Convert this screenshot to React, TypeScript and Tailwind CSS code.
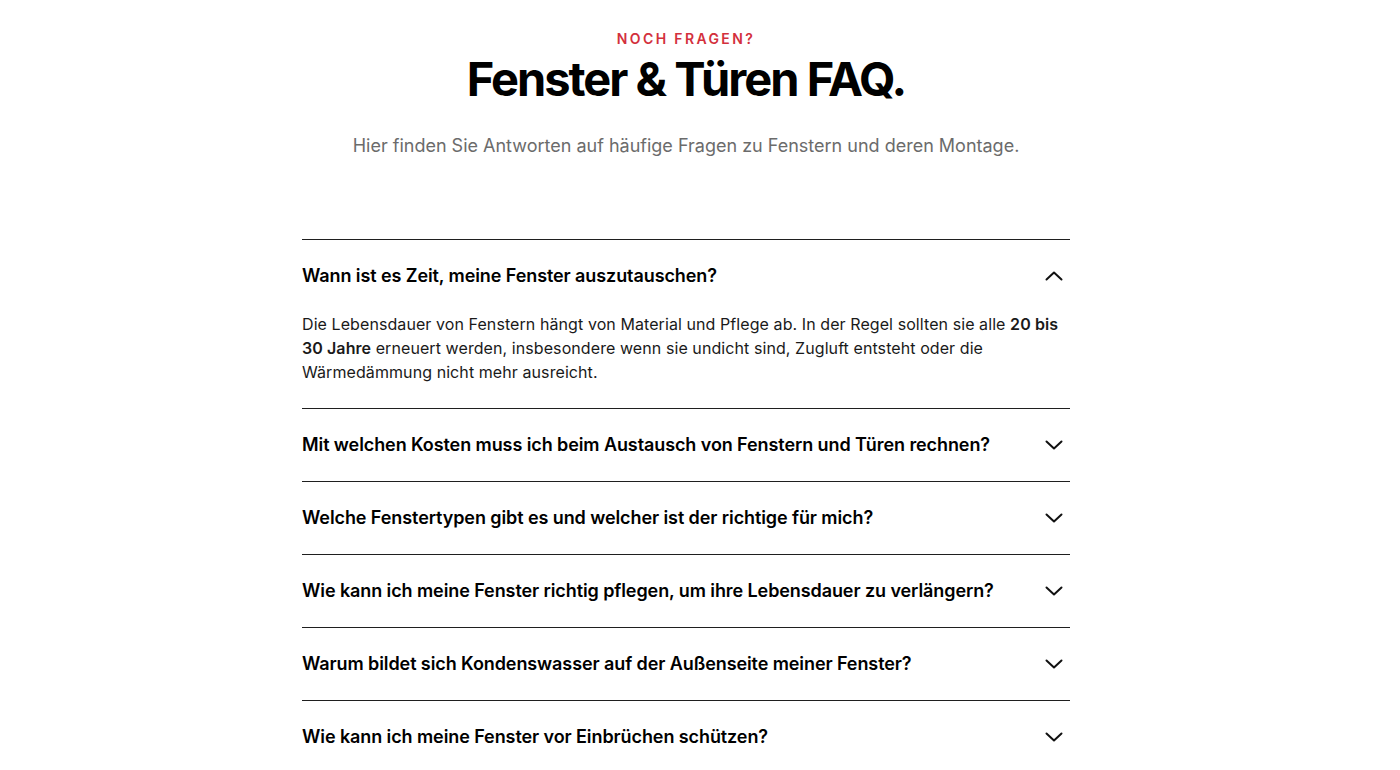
import { useState } from "react";

interface FaqItem {
  question: string;
  answer?: React.ReactNode;
}

const faqs: FaqItem[] = [
  {
    question: "Wann ist es Zeit, meine Fenster auszutauschen?",
    answer: (
      <>
        Die Lebensdauer von Fenstern hängt von Material und Pflege ab. In der Regel sollten sie alle{" "}
        <strong className="font-semibold">20 bis 30 Jahre</strong> erneuert werden, insbesondere wenn sie
        undicht sind, Zugluft entsteht oder die Wärmedämmung nicht mehr ausreicht.
      </>
    ),
  },
  { question: "Mit welchen Kosten muss ich beim Austausch von Fenstern und Türen rechnen?" },
  { question: "Welche Fenstertypen gibt es und welcher ist der richtige für mich?" },
  { question: "Wie kann ich meine Fenster richtig pflegen, um ihre Lebensdauer zu verlängern?" },
  { question: "Warum bildet sich Kondenswasser auf der Außenseite meiner Fenster?" },
  { question: "Wie kann ich meine Fenster vor Einbrüchen schützen?" },
];

function Chevron({ open }: { open: boolean }) {
  return (
    <svg
      width="18"
      height="10"
      viewBox="0 0 18 10"
      fill="none"
      stroke="currentColor"
      strokeWidth="2"
      strokeLinecap="round"
      strokeLinejoin="round"
      className={open ? "rotate-180" : ""}
    >
      <path d="M1.5 1.5 9 8.5l7.5-7" />
    </svg>
  );
}

export default function App() {
  const [openIndex, setOpenIndex] = useState<number | null>(0);

  return (
    <div
      className="min-h-screen bg-white pr-[28px] text-[#111]"
      style={{ fontFamily: "Inter, 'Noto Sans', sans-serif" }}
    >
      <div className="mx-auto w-[768px] pt-[29px]">
        <div className="text-center">
          <p className="text-[14px] font-semibold uppercase leading-5 tracking-[0.17em] text-[#d3303c]">
            Noch Fragen?
          </p>
          <h2 className="mt-[2px] text-[47px] font-bold leading-[56px] tracking-[-0.043em] text-black">
            Fenster &amp; Türen FAQ.
          </h2>
          <p className="mt-[25px] text-[18px] leading-7 text-[#6b6b6b]">
            Hier finden Sie Antworten auf häufige Fragen zu Fenstern und deren Montage.
          </p>
        </div>

        <div className="mt-[79px]">
          {faqs.map((item, i) => {
            const open = openIndex === i;
            return (
              <div key={i} className="border-t border-[#1f1f1f]">
                <button
                  onClick={() => setOpenIndex(open ? null : i)}
                  className="flex w-full items-center justify-between py-6 pr-[7px] text-left"
                >
                  <span className="text-[18px] font-semibold leading-6 tracking-[-0.005em] text-black">
                    {item.question}
                  </span>
                  <Chevron open={open} />
                </button>
                {open && item.answer && (
                  <div className="pb-6 pr-2 text-[16px] leading-6 tracking-[0.005em] text-[#1a1a1a]">
                    {item.answer}
                  </div>
                )}
              </div>
            );
          })}
        </div>
      </div>
    </div>
  );
}
